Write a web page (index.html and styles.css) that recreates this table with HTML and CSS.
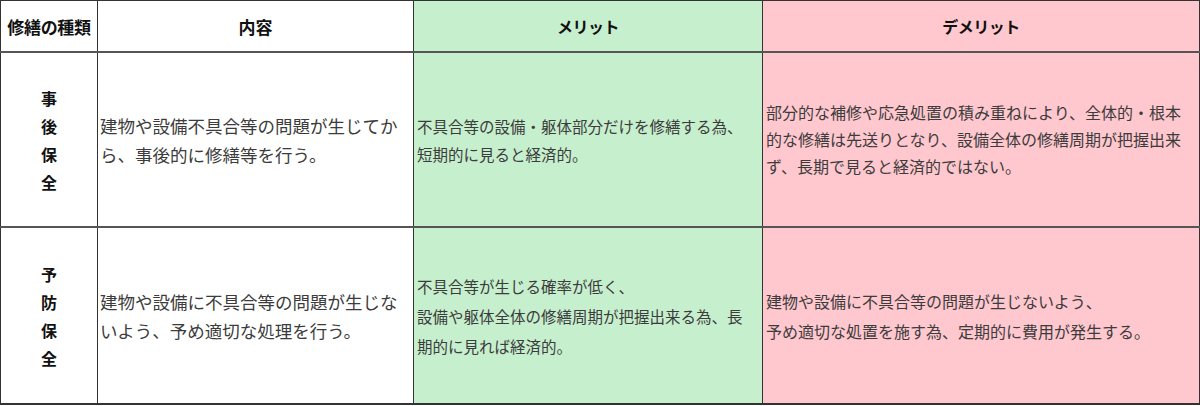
FILE: index.html
```html
<!DOCTYPE html>
<html lang="ja">
<head>
<meta charset="utf-8">
<link rel="stylesheet" href="styles.css">
</head>
<body>
<table class="tbl">
  <colgroup>
    <col class="c1"><col class="c2"><col class="c3"><col class="c4">
  </colgroup>
  <thead>
    <tr class="head">
      <th class="kind-h">修繕の種類</th>
      <th>内容</th>
      <th class="merit">メリット</th>
      <th class="demerit">デメリット</th>
    </tr>
  </thead>
  <tbody>
    <tr class="row r1">
      <td class="kind">事<br>後<br>保<br>全</td>
      <td class="content">建物や設備不具合等の問題が生じてか<br>ら、事後的に修繕等を行う。</td>
      <td class="merit mtext">不具合等の設備・躯体部分だけを修繕する為、<br>短期的に見ると経済的。</td>
      <td class="demerit dtext">部分的な補修や応急処置の積み重ねにより、全体的・根本<br>的な修繕は先送りとなり、設備全体の修繕周期が把握出来<br>ず、長期で見ると経済的ではない。</td>
    </tr>
    <tr class="row r2">
      <td class="kind">予<br>防<br>保<br>全</td>
      <td class="content">建物や設備に不具合等の問題が生じな<br>いよう、予め適切な処理を行う。</td>
      <td class="merit mtext">不具合等が生じる確率が低く、<br>設備や躯体全体の修繕周期が把握出来る為、長<br>期的に見れば経済的。</td>
      <td class="demerit dtext">建物や設備に不具合等の問題が生じないよう、<br>予め適切な処置を施す為、定期的に費用が発生する。</td>
    </tr>
  </tbody>
</table>
</body>
</html>
```

FILE: styles.css
```css
html, body {
  margin: 0;
  padding: 0;
  background: #ffffff;
}
body {
  font-family: "Noto Sans CJK JP", "Noto Sans", sans-serif;
  color: #3c3c3c;
}
.tbl {
  border-collapse: collapse;
  table-layout: fixed;
  width: 1199px;
  border-left: 1px solid #333;
  border-top: 1px solid #333;
  border-right: 1px solid #333;
  border-bottom: 2px solid #333;
}
.c1 { width: 97px; }
.c2 { width: 316px; }
.c3 { width: 349px; }
.c4 { width: 437px; }
th, td {
  border-left: 1px solid #333;
  border-right: 1px solid #333;
  padding: 0;
  vertical-align: middle;
}
.head th {
  height: 50px;
  font-size: 17px;
  font-weight: bold;
  color: #111;
  text-align: center;
  border-bottom: 2px solid #555;
  letter-spacing: 0;
}
.head .merit, .head .demerit {
  font-size: 16px;
  letter-spacing: -0.5px;
}
.head .kind-h {
  font-size: 17px;
  letter-spacing: -0.3px;
}
.row td {
  white-space: nowrap;
}
.r1 td {
  height: 173px;
  border-bottom: 2px solid #555;
}
.r2 td {
  height: 175px;
}
.merit { background: #c6efce; }
.demerit { background: #ffc7ce; }
.kind {
  text-align: center;
  font-weight: bold;
  font-size: 16px;
  color: #111;
  line-height: 28px;
}
.content {
  font-size: 17.5px;
  line-height: 29px;
  padding-left: 2px !important;
  text-align: left;
}
.mtext {
  font-size: 15.5px;
  line-height: 28px;
  padding-left: 3px !important;
  text-align: left;
}
.dtext {
  font-size: 16px;
  line-height: 27px;
  padding-left: 3px !important;
  text-align: left;
}
.r2 .mtext { line-height: 30px; }
.r2 .dtext { line-height: 30px; }
```
